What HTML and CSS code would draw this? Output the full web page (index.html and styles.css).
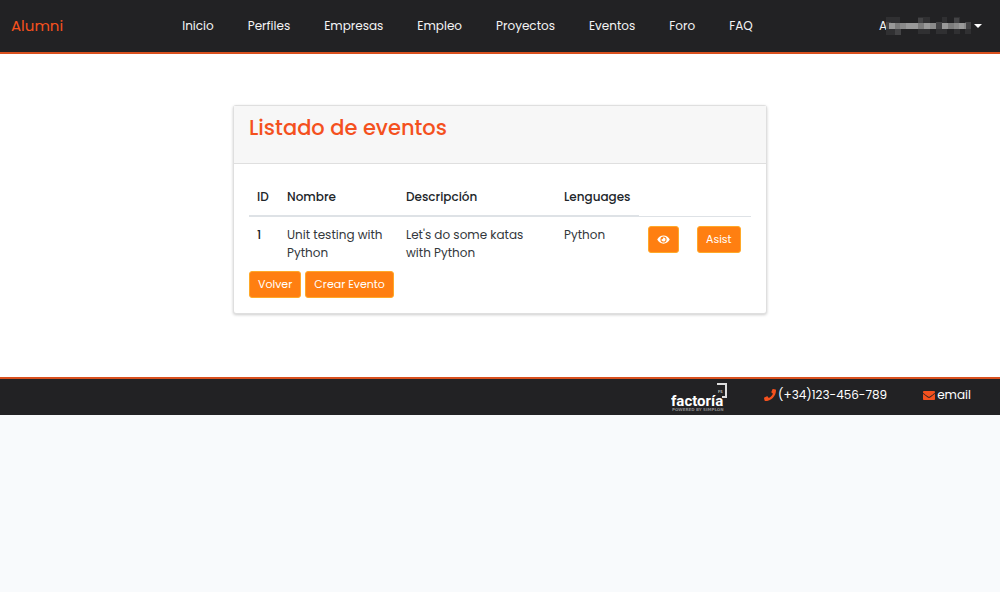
FILE: index.html
```html
<!DOCTYPE html>
<html lang="es">
<head>
<meta charset="utf-8">
<meta name="viewport" content="width=device-width, initial-scale=1">
<title>Alumni - Listado de eventos</title>
<link rel="stylesheet" href="styles.css">
</head>
<body>
<header class="navbar">
  <a class="brand" href="#">Alumni</a>
  <nav class="menu">
    <a href="#">Inicio</a>
    <a href="#">Perfiles</a>
    <a href="#">Empresas</a>
    <a href="#">Empleo</a>
    <a href="#">Proyectos</a>
    <a href="#">Eventos</a>
    <a href="#">Foro</a>
    <a href="#">FAQ</a>
  </nav>
  <button class="user" type="button" aria-label="Menú de usuario">
    <span>A</span>
    <svg class="mosaic" viewBox="0 0 86 18" width="86" height="18" aria-hidden="true" shape-rendering="crispEdges">
      <path fill="#303032" d="M0 0h14v18H0zM32 0h12v17H32zM50 5h6v12h-6zM56 0h5v17h-5zM68 0h6v17h-6zM79 5h6v12h-6z"/>
      <path fill="#434345" d="M0 5h5v7H0zM9 12h6v6H9zM32 1h5v5h-5zM50 5h6v7h-6zM68 1h5v5h-5zM79 5h6v7h-6z"/>
      <path fill="#8a8a8a" d="M3 6h47v6H3zM56 6h24v6H56z"/>
      <path fill="#999" d="M3 6h6v6H3zM20 6h12v6H20zM38 6h6v6h-6zM56 6h6v6h-6zM73 6h5v6h-5z"/>
      <path fill="#7c7c7c" d="M9 6h5v6H9zM32 6h6v6h-6zM62 6h6v6h-6z"/>
    </svg>
    <span class="caret"></span>
  </button>
</header>

<main class="content">
  <section class="card">
    <div class="card-header"><h1>Listado de eventos</h1></div>
    <div class="card-body">
      <table class="events">
        <colgroup>
          <col class="c-id"><col class="c-name"><col class="c-desc"><col class="c-lang"><col class="c-view"><col>
        </colgroup>
        <thead>
          <tr><th scope="col">ID</th><th scope="col">Nombre</th><th scope="col">Descripción</th><th scope="col">Lenguages</th></tr>
        </thead>
        <tbody>
          <tr>
            <th scope="row">1</th>
            <td>Unit testing with Python</td>
            <td>Let's do some katas with Python</td>
            <td>Python</td>
            <td class="action">
              <button class="btn" type="button" aria-label="Ver evento">
                <svg viewBox="0 0 576 512" width="13" height="11" aria-hidden="true"><path fill="currentColor" d="M572.5 241.4C518.3 135.6 410.9 64 288 64S57.700 135.600 3.500 241.400a32.400 32.400 0 0 0 0 29.200C57.700 376.400 165.100 448 288 448s230.300-71.600 284.500-177.400a32.400 32.400 0 0 0 0-29.200zM288 400a144 144 0 1 1 144-144 143.900 143.900 0 0 1-144 144zm0-240a95.300 95.300 0 0 0-25.300 3.800 47.900 47.900 0 0 1-66.900 66.900A95.800 95.800 0 1 0 288 160z"/></svg>
              </button>
            </td>
            <td class="action"><button class="btn" type="button">Asist</button></td>
          </tr>
        </tbody>
      </table>
      <div class="buttons">
        <button class="btn" type="button">Volver</button>
        <button class="btn" type="button">Crear Evento</button>
      </div>
    </div>
  </section>
</main>

<footer class="footer">
  <a class="logo" href="#" aria-label="factoría F5">
    <svg viewBox="0 0 58 30" width="58" height="30" aria-hidden="true">
      <path d="M46 1h9v13h-4" fill="none" stroke="#ddd" stroke-width="2"/>
      <text class="logo-mark" x="47" y="10">F5</text>
      <text class="logo-name" x="0" y="23">factoría</text>
      <text class="logo-tag" x="1" y="28">POWERED BY SIMPLON</text>
    </svg>
  </a>
  <a class="contact" href="tel:+34123456789">
    <svg viewBox="0 0 512 512" width="12" height="12" aria-hidden="true"><path fill="currentColor" d="M493.400 24.600l-104-24c-11.300-2.600-22.900 3.300-27.500 13.900l-48 112c-4.200 9.800-1.400 21.300 6.900 28l60.600 49.600c-36 76.700-98.900 140.500-177.200 177.200l-49.600-60.600c-6.800-8.300-18.200-11.100-28-6.900l-112 48C3.900 366.500-2 378.100.600 389.400l24 104C27.100 504.200 36.700 512 48 512c256.100 0 464-207.500 464-464 0-11.200-7.700-20.900-18.600-23.400z"/></svg>
    <span>(+34)123-456-789</span>
  </a>
  <a class="contact" href="#">
    <svg viewBox="0 64 512 384" width="12" height="9" aria-hidden="true"><path fill="currentColor" d="M502.300 190.800c3.900-3.100 9.700-.2 9.700 4.700V400c0 26.500-21.500 48-48 48H48c-26.500 0-48-21.500-48-48V195.600c0-5 5.700-7.800 9.700-4.700 22.400 17.400 52.100 39.500 154.100 113.600 21.100 15.400 56.700 47.800 92.200 47.600 35.700.3 72-32.800 92.300-47.600 102-74.100 131.600-96.300 154-113.700zM256 320c23.200.4 56.600-29.200 73.400-41.400 132.700-96.300 142.800-104.700 173.400-128.700 5.800-4.500 9.200-11.500 9.200-18.900v-19c0-26.500-21.500-48-48-48H48c-26.500 0-48 21.500-48 48v19c0 7.400 3.400 14.300 9.200 18.900 30.600 23.900 40.700 32.400 173.400 128.700 16.800 12.200 50.200 41.800 73.400 41.400z"/></svg>
    <span>email</span>
  </a>
</footer>
</body>
</html>
```
FILE: styles.css
```css
*, *::before, *::after { box-sizing: border-box; }

body {
  margin: 0;
  background: #f8fafc;
  color: #212529;
  font: 12px/18px Poppins, Inter, "Open Sans", sans-serif;
}

a { color: inherit; text-decoration: none; }

button {
  font: inherit;
  color: inherit;
  border: 0;
  background: none;
  padding: 0;
  cursor: pointer;
}

.navbar {
  display: grid;
  grid-template-columns: 1fr auto 1fr;
  align-items: center;
  padding: 14px 18px 14px 11px;
  background: #222224;
  border-bottom: 2px solid #d9501e;
  color: #f4f4f4;
}

.brand { color: #f4511e; font-size: 15px; line-height: 24px; }

.menu { display: flex; gap: 34px; margin-right: 58px; }

.user { display: flex; align-items: center; justify-self: end; }

.mosaic { margin-right: 2px; margin-left: -1px; }

.caret {
  border: 4px solid transparent;
  border-top-color: #fff;
  border-bottom: 0;
}

.content { background: #fff; padding: 51px 16px 63px; }

.card {
  max-width: 534px;
  margin: 0 auto;
  background: #fff;
  border: 1px solid #dfdfdf;
  border-radius: 3px;
  box-shadow: 0 1px 3px rgba(0, 0, 0, 0.2);
}

.card-header {
  padding: 9px 15px 22px;
  background: #f7f7f7;
  border-bottom: 1px solid #dfdfdf;
}

h1 {
  margin: 0;
  color: #f4511e;
  font-size: 21px;
  font-weight: 500;
  line-height: 26px;
}

.card-body { padding: 15px; }

.events { width: 100%; table-layout: fixed; border-spacing: 0; }
.c-id { width: 30px; }
.c-name { width: 119px; }
.c-desc { width: 158px; }
.c-lang { width: 83px; }
.c-view { width: 49px; }

th, td { padding: 9px 8px; text-align: left; vertical-align: top; }
th { font-weight: 500; }
td { color: #33373b; }
td.action { padding-right: 0; padding-left: 9px; }
thead th { border-bottom: 1px solid #dee2e6; }
tbody th, tbody td { border-top: 1px solid #dee2e6; }

.btn {
  padding: 4px 8px;
  background: #ff7f11;
  border: 1px solid #ffa928;
  border-radius: 3px;
  color: #fff;
  font-size: 11px;
  font-weight: 400;
  line-height: 17px;
}

.btn svg { display: block; margin: 3px 0; }

.buttons { display: flex; gap: 4px; }

.footer {
  display: flex;
  justify-content: flex-end;
  align-items: flex-start;
  padding: 4px 29px 2px;
  background: #222224;
  border-top: 2px solid #d9501e;
  color: #fff;
}

.logo { display: flex; margin-right: 35px; }
.logo-name { fill: #fff; font: 700 15px Roboto, sans-serif; }
.logo-mark { fill: #bbb; font: 700 4px Roboto, sans-serif; }
.logo-tag { fill: #888; font: 700 4px "DejaVu Sans", sans-serif; }

.contact {
  display: flex;
  align-items: center;
  gap: 2px;
  padding-top: 3px;
}
.contact + .contact { margin-left: 36px; }
.contact svg { color: #f4511e; }
```
